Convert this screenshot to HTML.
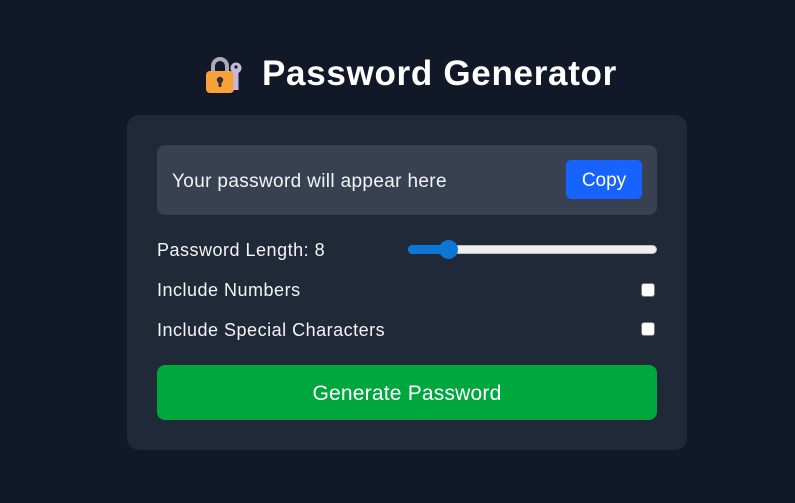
<!DOCTYPE html>
<html><head><meta charset="utf-8"><style>
*{box-sizing:border-box;margin:0;padding:0}
body{width:795px;height:503px;background:#111827;font-family:"Liberation Sans",sans-serif;color:#fff;position:relative;overflow:hidden}
h1{position:absolute;left:262px;top:54px;font-size:35px;font-weight:bold;letter-spacing:0.7px}
.card{position:absolute;left:127px;top:115px;width:560px;height:335px;background:#1f2937;border-radius:12px}
.out{position:absolute;left:30px;top:30px;width:500px;height:70px;background:#374151;border-radius:8px}
.out span{position:absolute;left:15px;top:26px;font-size:19px;color:#f3f4f6;letter-spacing:0.35px}
.copy{position:absolute;right:15px;top:15px;width:76px;height:39px;background:#1763ff;border-radius:5px;font-size:19px;text-align:center;line-height:41px}
.lbl{position:absolute;left:30px;font-size:18px;color:#f3f4f6;letter-spacing:0.5px}
.track{position:absolute;left:281px;top:130px;width:249px;height:9px;background:#eee;border-radius:5px;border:1px solid #bbb}
.fill{position:absolute;left:281px;top:130px;width:40px;height:9px;background:#0b76d6;border-radius:5px}
.thumb{position:absolute;left:312px;top:125px;width:19px;height:19px;border-radius:50%;background:#0b76d6}
.cb{position:absolute;left:514px;width:14px;height:14px;background:#fff;border:1px solid #777;border-radius:3px}
.gen{position:absolute;left:30px;top:250px;width:500px;height:55px;background:#00a63e;border-radius:8px;font-size:21px;text-align:center;line-height:57px;letter-spacing:0.2px}
</style></head><body>
<svg style="position:absolute;left:205px;top:56px" width="40" height="38" viewBox="0 0 40 38">
<path d="M8 17V10a7 7 0 0 1 14 0v7" fill="none" stroke="#a9a9b8" stroke-width="4"/>
<rect x="1" y="15" width="28" height="22" rx="4" fill="#f7a33a"/>
<circle cx="15" cy="24" r="3.2" fill="#3a2a3a"/><rect x="13.5" y="25" width="3" height="6" rx="1" fill="#3a2a3a"/>
<circle cx="31" cy="12" r="5.5" fill="#c7b8e0"/><circle cx="31" cy="11" r="1.6" fill="#111827"/><rect x="28.5" y="15" width="5" height="19" fill="#c7b8e0"/>
</svg>
<h1>Password Generator</h1>
<div class="card">
<div class="out"><span>Your password will appear here</span><div class="copy">Copy</div></div>
<div class="lbl" style="top:125px">Password Length: 8</div>
<div class="track"></div><div class="fill"></div><div class="thumb"></div>
<div class="lbl" style="top:165px">Include Numbers</div><div class="cb" style="top:168px"></div>
<div class="lbl" style="top:205px">Include Special Characters</div><div class="cb" style="top:207px"></div>
<div class="gen">Generate Password</div>
</div>
</body></html>
